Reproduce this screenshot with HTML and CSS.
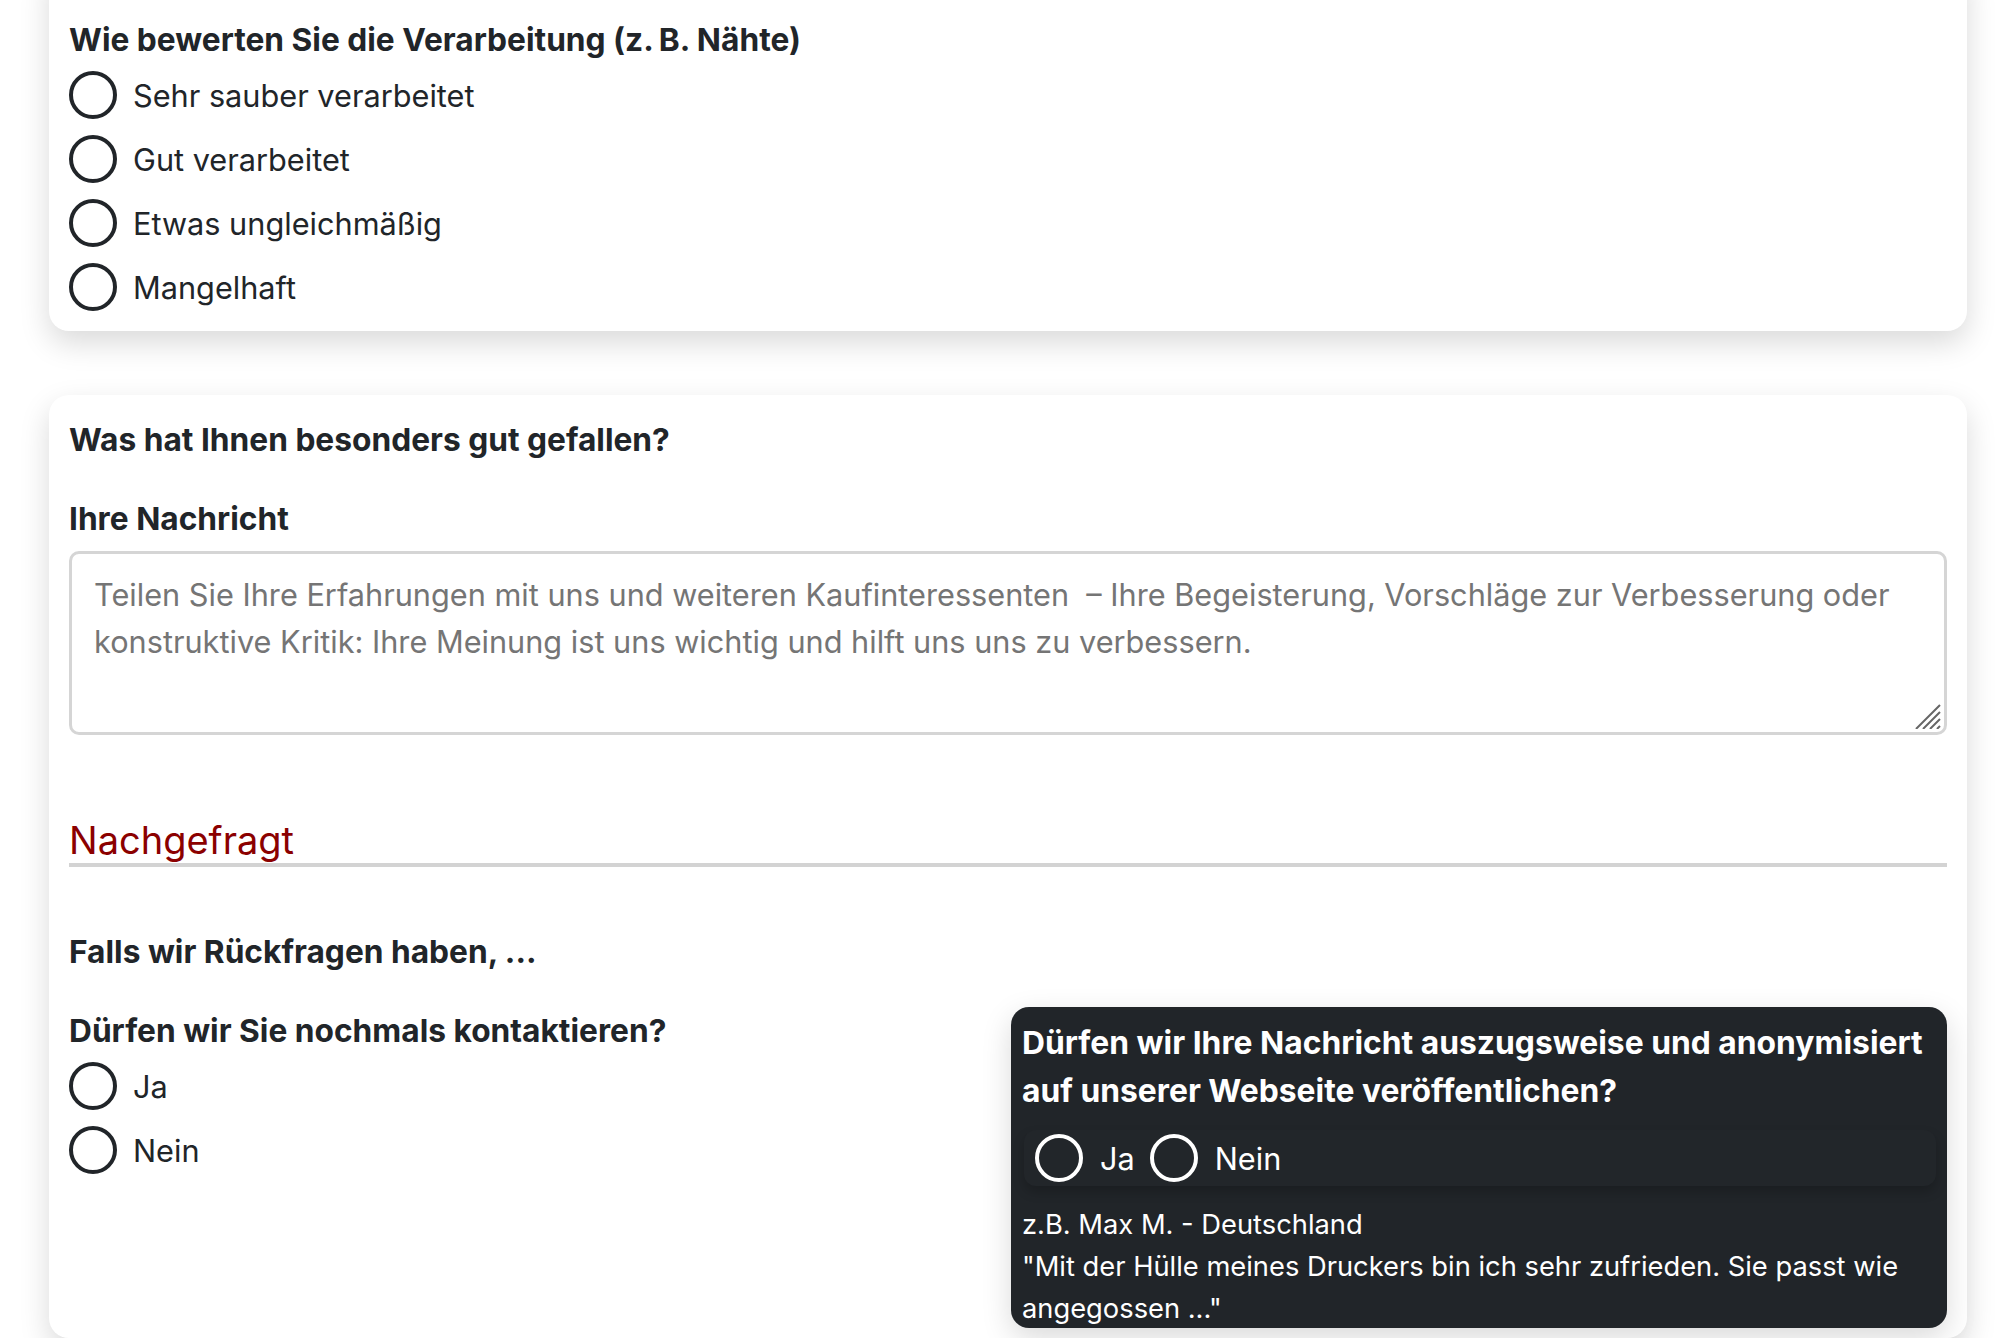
FILE: index.html
```html
<!DOCTYPE html>
<html lang="de">
<head>
    <meta charset="UTF-8">
    <meta name="viewport" content="width=device-width, initial-scale=1.0">
    <title>Feedback</title>
    <link rel="stylesheet" href="styles.css">
</head>
<body>
    <div class="page">
        <div class="card card-top">
            <div class="question">Wie bewerten Sie die Verarbeitung (z.&#8239;B. Nähte)</div>
            <label class="option"><input type="radio" name="verarbeitung"> Sehr sauber verarbeitet</label>
            <label class="option"><input type="radio" name="verarbeitung"> Gut verarbeitet</label>
            <label class="option"><input type="radio" name="verarbeitung"> Etwas ungleichmäßig</label>
            <label class="option"><input type="radio" name="verarbeitung"> Mangelhaft</label>
        </div>

        <div class="card">
            <div class="question">Was hat Ihnen besonders gut gefallen?</div>
            <div class="question field-label">Ihre Nachricht</div>
            <div class="message-wrap">
                <textarea class="message" placeholder="Teilen Sie Ihre Erfahrungen mit uns und weiteren Kaufinteressenten  – Ihre Begeisterung, Vorschläge zur Verbesserung oder konstruktive Kritik: Ihre Meinung ist uns wichtig und hilft uns uns zu verbessern."></textarea>
                <svg class="grip" width="26" height="25" viewBox="0 0 26 25">
                    <path d="M1 25 L25 1 M8 25 L25 8 M15 25 L25 15 M22 25 L25 22" stroke="#666" stroke-width="2" fill="none"/>
                </svg>
            </div>

            <h2 class="section-title">Nachgefragt</h2>
            <div class="question followup">Falls wir Rückfragen haben, ...</div>

            <div class="columns">
                <div class="col">
                    <div class="question">Dürfen wir Sie nochmals kontaktieren?</div>
                    <label class="option"><input type="radio" name="kontakt"> Ja</label>
                    <label class="option"><input type="radio" name="kontakt"> Nein</label>
                </div>
                <div class="col dark-box">
                    <div class="question">Dürfen wir Ihre Nachricht auszugsweise und anonymisiert auf unserer Webseite veröffentlichen?</div>
                    <div class="inline-options">
                        <label class="option"><input type="radio" name="publish"> Ja</label>
                        <label class="option"><input type="radio" name="publish"> Nein</label>
                    </div>
                    <p class="example">z.B. Max M. - Deutschland<br>"Mit der Hülle meines Druckers bin ich sehr zufrieden. Sie passt wie angegossen ..."</p>
                </div>
            </div>
        </div>
    </div>
</body>
</html>
```

FILE: styles.css
```css
body {
    margin: 0;
    font-family: 'Inter', 'Roboto', sans-serif;
    font-size: 30.7px;
    color: #212529;
    background: #fff;
    overflow: hidden;
}
.page {
    padding: 0 47px 0 49px;
}
.card {
    background: #fff;
    border-radius: 20px;
    box-shadow: 0 12px 30px rgba(0, 0, 0, 0.15);
    padding: 23px 20px 10px 20px;
}
.card-top {
    margin-top: -40px;
    padding-top: 58px;
    padding-bottom: 12px;
    margin-bottom: 64px;
}
.question {
    font-size: 31.7px;
    font-weight: bold;
    line-height: 44px;
    margin-bottom: 1px;
}
.field-label {
    margin-top: 35px;
    margin-bottom: 0;
}
.option {
    display: flex;
    align-items: center;
    gap: 16px;
    height: 64px;
}
.option input {
    appearance: none;
    -webkit-appearance: none;
    width: 48px;
    height: 48px;
    margin: 0;
    border: 4px solid #212529;
    border-radius: 50%;
    background: transparent;
    flex-shrink: 0;
}
.message-wrap {
    position: relative;
    margin-top: 10px;
}
.message {
    display: block;
    box-sizing: border-box;
    width: 100%;
    height: 184px;
    padding: 17px 22px;
    border: 3px solid #d5d5d5;
    border-radius: 10px;
    font-family: inherit;
    font-size: 30.7px;
    line-height: 47px;
    color: #212529;
    resize: none;
}
.message::placeholder {
    color: #757575;
}
.grip {
    position: absolute;
    right: 6px;
    bottom: 6px;
}
.section-title {
    margin: 82px 0 0 0;
    font-size: 38px;
    font-weight: normal;
    line-height: 46px;
    color: #8b0000;
    border-bottom: 4px solid #d3d3d3;
}
.followup {
    margin-top: 63px;
}
.columns {
    display: grid;
    grid-template-columns: 1fr 1fr;
    gap: 6px;
    margin-top: 33px;
}
.col .question {
    margin-top: 2px;
}
.dark-box {
    background: #212529;
    color: #fff;
    border-radius: 18px;
    box-shadow: 0 10px 30px rgba(0, 0, 0, 0.15);
    padding: 12px 11px 0 11px;
    height: 309px;
    overflow: hidden;
}
.dark-box .question {
    font-size: 31.8px;
    line-height: 48px;
    margin: 0;
}
.inline-options {
    display: flex;
    gap: 15px;
    margin: 15px 0 0 2px;
    padding-left: 11px;
    height: 56px;
    border-radius: 12px;
    background: #22262a;
    box-shadow: 0 6px 12px rgba(0, 0, 0, 0.2);
}
.dark-box .option {
    height: 56px;
    gap: 17px;
}
.dark-box .option input {
    border-color: #fff;
}
.example {
    margin: 18px 0 0 0;
    font-size: 27.3px;
    line-height: 42px;
}
```
